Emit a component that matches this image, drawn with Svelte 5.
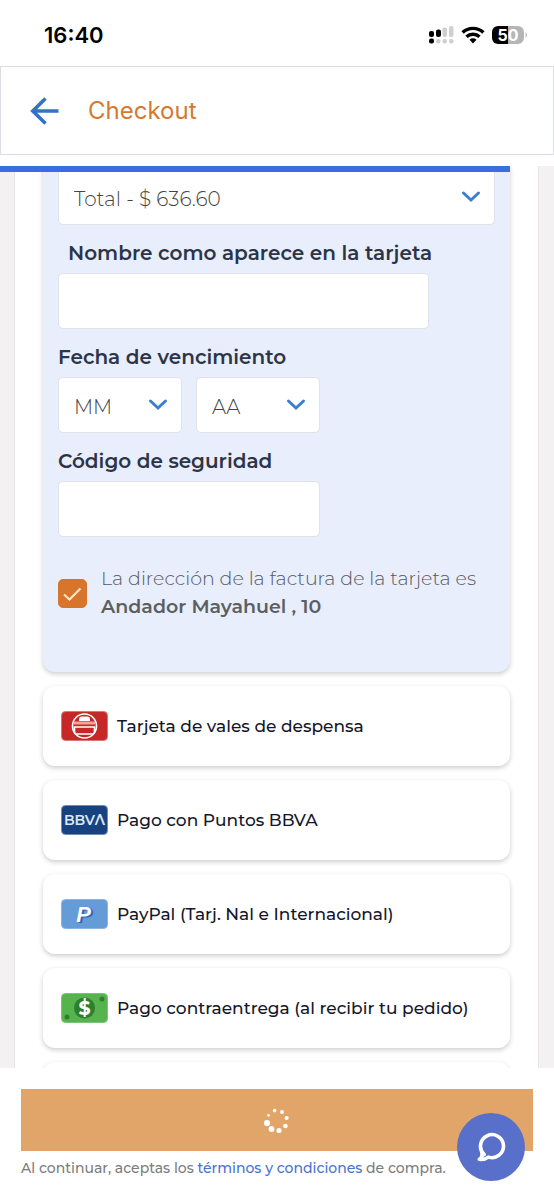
<script lang="ts">
	type Method = { id: string; name: string };

	const methods: Method[] = [
		{ id: 'vales', name: 'Tarjeta de vales de despensa' },
		{ id: 'bbva', name: 'Pago con Puntos BBVA' },
		{ id: 'paypal', name: 'PayPal (Tarj. Nal e Internacional)' },
		{ id: 'cash', name: 'Pago contraentrega (al recibir tu pedido)' }
	];

	// spinner dots, clockwise from the top
	const dots = [
		{ x: 12.6, y: 5.6, r: 1.8 },
		{ x: 20, y: 7, r: 2 },
		{ x: 24.6, y: 13, r: 2.1 },
		{ x: 23.4, y: 21, r: 2.3 },
		{ x: 17, y: 25.5, r: 2.6 },
		{ x: 9.5, y: 24, r: 2.9 },
		{ x: 5, y: 18, r: 3.1 },
		{ x: 6.5, y: 10.3, r: 1.4 }
	];

	let progress = $state(92);
	let sameAddress = $state(true);
	let cardName = $state('');
	let code = $state('');
</script>

{#snippet chevron()}
	<svg class="chevron" viewBox="0 0 20 14" aria-hidden="true">
		<path d="M2.500 3 10 10 17.500 3" />
	</svg>
{/snippet}

<div class="app">
	<div class="status">
		<span class="time">16:40</span>
		<div class="status-icons">
			<svg width="26" height="20" viewBox="0 0 26 20" aria-hidden="true">
				<g fill="#000">
					<rect x="1" y="6" width="5" height="6" rx="2" />
					<rect x="8" y="4.5" width="5" height="7.5" rx="2" />
					<rect x="1" y="13.5" width="5" height="5" rx="2" />
				</g>
				<g fill="#cfcfcf">
					<rect x="14.5" y="2.5" width="4.5" height="9.5" rx="2" />
					<rect x="21" y="1" width="4.5" height="11" rx="2" />
					<rect x="8" y="14" width="4.5" height="4.5" rx="2" />
					<rect x="14.5" y="14" width="4.5" height="4.5" rx="2" />
					<rect x="21" y="14" width="4.5" height="4.5" rx="2" />
				</g>
			</svg>
			<svg width="24" height="18" viewBox="0 0 24 18" aria-hidden="true">
				<g fill="none" stroke="#000" stroke-width="3.4">
					<path d="M1.6 6.6a15 15 0 0 1 20.8 0" />
					<path d="M5.5 10.8a9.4 9.4 0 0 1 13 0" />
				</g>
				<path d="M8.5 13.8a5 5 0 0 1 7 0L12 17.4z" />
			</svg>
			<svg width="36" height="18" viewBox="0 0 36 18" aria-hidden="true">
				<path d="M6 0H16V18H6A6 6 0 0 1 0 12V6A6 6 0 0 1 6 0Z" />
				<path fill="#b5b5b5" d="M16 0H26A6 6 0 0 1 32 6V12A6 6 0 0 1 26 18H16ZM33.5 6.2a3.4 3.4 0 0 1 0 5.6Z" />
				<text class="battery" x="16" y="14.500" text-anchor="middle">50</text>
			</svg>
		</div>
	</div>

	<header class="header">
		<button class="back" type="button" aria-label="Regresar">
			<svg width="30" height="30" viewBox="0 0 30 30" aria-hidden="true">
				<path d="M29.500 15H4M16.500 2.500 3.800 15l12.700 12.500" />
			</svg>
		</button>
		<h1>Checkout</h1>
	</header>

	<main class="main">
		<div class="progress" style="width: {progress}%"></div>
		<div class="sheet">
			<form class="panel">
				<div class="select">
					<select aria-label="Pagos">
						<option>Total - $ 636.60</option>
					</select>
					{@render chevron()}
				</div>

				<label class="label indent" for="card-name">Nombre como aparece en la tarjeta</label>
				<input class="field name" id="card-name" type="text" bind:value={cardName} />

				<label class="label" for="month">Fecha de vencimiento</label>
				<div class="dates">
					<div class="select">
						<select id="month">
							<option>MM</option>
						</select>
						{@render chevron()}
					</div>
					<div class="select">
						<select id="year" aria-label="Año">
							<option>AA</option>
						</select>
						{@render chevron()}
					</div>
				</div>

				<label class="label" for="code">Código de seguridad</label>
				<input class="field code" id="code" type="text" inputmode="numeric" bind:value={code} />

				<label class="address">
					<span class="check">
						<input type="checkbox" bind:checked={sameAddress} />
						{#if sameAddress}
							<svg viewBox="0 0 29 29" aria-hidden="true">
								<path d="M6 15.500 11.500 20.500 22.500 9.500" />
							</svg>
						{/if}
					</span>
					<span>
						La dirección de la factura de la tarjeta es<br />
						<strong>Andador Mayahuel , 10</strong>
					</span>
				</label>
			</form>

			{#each methods as method}
				<button class="method" type="button">
					<svg class="logo" viewBox="0 0 47 30" aria-hidden="true">
						{#if method.id === 'vales'}
							<rect x="0.500" y="0.500" width="46" height="29" rx="4" fill="#c62828" stroke="#dc7777" />
							<g fill="none" stroke="#fff" stroke-width="1.600">
								<circle cx="23.500" cy="15" r="12" />
								<path d="M13.500 16h20v5q0 2-2 2h-16q-2 0-2-2z" />
							</g>
							<path fill="#f0a5a0" d="M13 10.500h21v3H13z" />
							<path fill="#fff" d="M18 8.500q0-3 3-3h5q3 0 3 3v1.500H18z" />
						{:else if method.id === 'bbva'}
							<rect x="0.500" y="0.500" width="46" height="29" rx="4" fill="#18427f" stroke="#6a8dbb" />
							<text class="bbva" x="23.500" y="20" text-anchor="middle">BBVΛ</text>
						{:else if method.id === 'paypal'}
							<rect x="0.500" y="0.500" width="46" height="29" rx="4" fill="#659bd6" stroke="#8db4e0" />
							<text class="paypal" x="24.500" y="23.500" fill="#2f62b3" text-anchor="middle">P</text>
							<text class="paypal" x="22.500" y="22.500" fill="#fff" text-anchor="middle">P</text>
						{:else}
							<rect x="0.500" y="0.500" width="46" height="29" rx="4" fill="#56b34e" stroke="#7cc576" />
							<g fill="#2c7f2d">
								<circle cx="23.500" cy="15" r="10.500" />
								<circle cx="41" cy="6" r="2.500" />
								<circle cx="6" cy="24" r="2.500" />
							</g>
							<text class="dollar" x="23.500" y="22" text-anchor="middle">$</text>
						{/if}
					</svg>
					<span>{method.name}</span>
				</button>
			{/each}
			<div class="method"></div>
		</div>
	</main>

	<footer class="footer">
		<button class="pay" type="button" aria-label="Procesando">
			<svg width="30" height="30" viewBox="0 0 30 30" aria-hidden="true">
				{#each dots as dot}
					<circle cx={dot.x} cy={dot.y} r={dot.r} />
				{/each}
			</svg>
		</button>
		<p>Al continuar, aceptas los <a href="#terminos">términos y condiciones</a> de compra.</p>
		<button class="chat" type="button" aria-label="Chat">
			<svg width="30" height="30" viewBox="0 0 30 30" aria-hidden="true">
				<path d="M8.200 22.600A11.500 11.500 0 1 1 12.500 25.100Q8.500 28 3.300 27.300 7 25.500 5.800 20.500" />
			</svg>
		</button>
	</footer>
</div>

<style>
	:global(body) {
		margin: 0;
		background: #fff;
	}

	.app {
		display: flex;
		flex-direction: column;
		height: 100vh;
		font-family: Montserrat, Inter, sans-serif;
	}

	button,
	input,
	select {
		box-sizing: border-box;
		margin: 0;
		font-family: inherit;
	}

	.status {
		display: flex;
		align-items: center;
		justify-content: space-between;
		height: 66px;
		padding: 4px 26px 0 44px;
		box-sizing: border-box;
		font-family: Inter, sans-serif;
	}

	.time {
		font-size: 22px;
		font-weight: 600;
	}

	.status-icons {
		display: flex;
		align-items: center;
		gap: 7px;
	}

	.battery {
		fill: #fff;
		font-size: 16px;
		font-weight: 700;
	}

	.header {
		display: flex;
		align-items: center;
		gap: 29px;
		height: 89px;
		margin-bottom: 11px;
		padding: 0 28px;
		border: 1px solid #dcdde3;
		box-sizing: border-box;
	}

	.back {
		display: flex;
		padding: 0;
		border: none;
		background: none;
		cursor: pointer;
	}

	.back path {
		fill: none;
		stroke: #3372c4;
		stroke-width: 3.6;
	}

	h1 {
		margin: 0;
		color: #d47a30;
		font-family: Inter, sans-serif;
		font-size: 24px;
		font-weight: 400;
	}

	.main {
		position: relative;
		flex: 1;
		min-height: 0;
		overflow: hidden;
		background: #f3f1f2;
	}

	.progress {
		position: absolute;
		top: 0;
		left: 0;
		height: 6px;
		background: #3a6ee0;
	}

	.sheet {
		display: flex;
		flex-direction: column;
		gap: 14px;
		margin: 0 15px 0 14px;
		padding: 0 28px;
		border: 1px solid #e6e4e6;
		border-width: 0 1px;
		background: #fff;
	}

	.panel {
		display: flex;
		flex-direction: column;
		padding: 3px 15px 51px;
		border-radius: 0 0 12px 12px;
		background: #e8eefc;
		box-shadow: 0 2px 5px rgba(0, 0, 0, 0.2);
	}

	.select {
		display: grid;
		align-items: center;
	}

	.select select,
	.chevron {
		grid-area: 1 / 1;
	}

	.select select,
	.field {
		width: 100%;
		height: 56px;
		padding: 4px 15px 0;
		border: 1px solid #e2e3e8;
		border-radius: 5px;
		background: #fff;
		color: #444;
		font-size: 20px;
		font-weight: 300;
		appearance: none;
	}

	.chevron {
		justify-self: end;
		width: 20px;
		height: 14px;
		margin-right: 14px;
		pointer-events: none;
	}

	.chevron path {
		fill: none;
		stroke: #3a7fd0;
		stroke-width: 3;
		stroke-linecap: round;
	}

	.label {
		margin: 14px 0 6px;
		color: #2d3448;
		font-size: 20px;
		font-weight: 600;
		line-height: 28px;
	}

	.indent {
		margin-left: 10px;
	}

	.name {
		width: 85%;
	}

	.code {
		width: 60%;
	}

	.dates {
		display: grid;
		grid-template-columns: 1fr 1fr;
		gap: 14px;
		width: 60%;
	}

	.address {
		display: flex;
		align-items: center;
		gap: 14px;
		margin-top: 28px;
		color: #555862;
		font-size: 19px;
		font-weight: 300;
		line-height: 28px;
	}

	.address strong {
		color: #5c5e62;
		font-weight: 600;
	}

	.check {
		display: grid;
		flex-shrink: 0;
	}

	.check input,
	.check svg {
		grid-area: 1 / 1;
		width: 29px;
		height: 29px;
	}

	.check input {
		border: 1px solid #d8752c;
		border-radius: 5px;
		appearance: none;
	}

	.check input:checked {
		background: #d8752c;
	}

	.check svg {
		pointer-events: none;
	}

	.check path {
		fill: none;
		stroke: #fbe3c8;
		stroke-width: 2.2;
	}

	.method {
		display: flex;
		align-items: center;
		gap: 9px;
		flex-shrink: 0;
		height: 80px;
		padding: 0 18px;
		border: none;
		border-radius: 12px;
		background: #fff;
		box-shadow: 0 2px 5px rgba(0, 0, 0, 0.2);
		color: #14172a;
		font-size: 17px;
		font-weight: 500;
		text-align: left;
		cursor: pointer;
	}

	.logo {
		width: 47px;
		height: 30px;
	}

	.bbva {
		fill: #dce8f8;
		font-size: 14px;
		font-weight: 600;
	}

	.paypal {
		font-family: 'Liberation Sans', sans-serif;
		font-size: 22px;
		font-style: italic;
		font-weight: 700;
	}

	.dollar {
		fill: #fff;
		font-size: 19px;
		font-weight: 700;
	}

	.footer {
		position: relative;
		padding: 21px;
		background: #fff;
	}

	.pay {
		display: flex;
		align-items: center;
		justify-content: center;
		width: 100%;
		height: 62px;
		border: none;
		background: #e2a569;
	}

	.pay circle {
		fill: #fff;
	}

	.footer p {
		margin: 7px 0 0;
		color: #7c7c7c;
		font-size: 14px;
		font-weight: 500;
		line-height: 20px;
	}

	.footer a {
		color: #4a72d0;
		text-decoration: none;
	}

	.chat {
		position: absolute;
		right: 29px;
		bottom: 18px;
		display: flex;
		align-items: center;
		justify-content: center;
		width: 68px;
		height: 68px;
		padding: 0;
		border: none;
		border-radius: 50%;
		background: #5970cb;
		cursor: pointer;
	}

	.chat path {
		fill: none;
		stroke: #fff;
		stroke-width: 3.6;
		stroke-linejoin: round;
		stroke-linecap: round;
	}
</style>
